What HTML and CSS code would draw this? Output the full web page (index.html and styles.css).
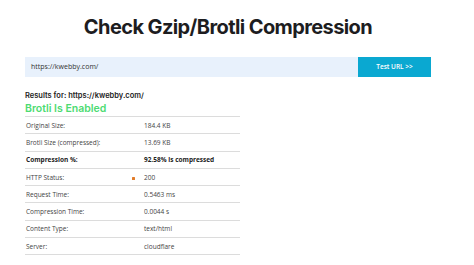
FILE: index.html
```html
<!DOCTYPE html>
<html>
<head>
<meta charset="utf-8">
<link rel="stylesheet" href="styles.css">
</head>
<body>
<div class="page">
  <h1 class="title">Check Gzip/Brotli Compression</h1>
  <div class="form">
    <div class="input">https://kwebby.com/</div>
    <div class="btn">Test URL &gt;&gt;</div>
  </div>
  <div class="results">
    <div class="res-for">Results for: https://kwebby.com/</div>
    <div class="status">Brotli Is Enabled</div>
    <div class="table">
      <div class="row"><span class="k">Original Size:</span><span class="v">184.4 KB</span></div>
      <div class="row"><span class="k">Brotli Size (compressed):</span><span class="v">13.69 KB</span></div>
      <div class="row bold"><span class="k">Compression %:</span><span class="v">92.58% is compressed</span></div>
      <div class="row"><span class="k">HTTP Status:<i class="dot"></i></span><span class="v">200</span></div>
      <div class="row"><span class="k">Request Time:</span><span class="v">0.5463 ms</span></div>
      <div class="row"><span class="k">Compression Time:</span><span class="v">0.0044 s</span></div>
      <div class="row"><span class="k">Content Type:</span><span class="v">text/html</span></div>
      <div class="row"><span class="k">Server:</span><span class="v">cloudflare</span></div>
    </div>
  </div>
</div>
</body>
</html>
```
FILE: styles.css
```css
html, body {
  margin: 0;
  padding: 0;
  background: #ffffff;
}
.page {
  width: 474px;
  height: 265px;
  overflow: hidden;
  padding-left: 25px;
  box-sizing: border-box;
  font-family: "Open Sans", "Liberation Sans", sans-serif;
  color: #333;
}
.title {
  margin: 0;
  width: 406px;
  padding-top: 12px;
  height: 35px;
  text-align: center;
  font-family: "Inter", "Liberation Sans", sans-serif;
  font-weight: 700;
  font-size: 20px;
  line-height: 30px;
  color: #1d1d1f;
  letter-spacing: -0.6px;
}
.form {
  display: flex;
  margin-top: 10px;
  width: 406px;
  height: 20px;
}
.input {
  flex: 1;
  background: #e8f1fc;
  font-size: 7px;
  line-height: 20px;
  padding-left: 6px;
  color: #333;
}
.btn {
  width: 73px;
  background: #0aa8d1;
  color: #fff;
  font-size: 6.5px;
  font-weight: 600;
  line-height: 20px;
  text-align: center;
}
.results {
  width: 215px;
  padding-top: 13px;
}
.res-for {
  font-family: "Inter", "Liberation Sans", sans-serif;
  font-size: 7.5px;
  font-weight: 600;
  color: #222;
  line-height: 11px;
}
.status {
  font-family: "Inter", "Liberation Sans", sans-serif;
  font-size: 10.5px;
  font-weight: 600;
  color: #4ddb72;
  line-height: 15px;
}
.table {
  border-bottom: 1px solid #dcdcdc;
}
.row {
  display: flex;
  height: 16.3px;
  border-top: 1px solid #dcdcdc;
  align-items: center;
  font-size: 6.5px;
  color: #444;
}
.row.bold {
  font-weight: 700;
  color: #222;
}
.k {
  width: 118px;
  padding-left: 1px;
  position: relative;
}
.dot {
  position: absolute;
  left: 107px;
  top: 50%;
  width: 2.5px;
  height: 2.5px;
  border-radius: 0.5px;
  background: #e27d2a;
}
.v {
  flex: 1;
}
```
